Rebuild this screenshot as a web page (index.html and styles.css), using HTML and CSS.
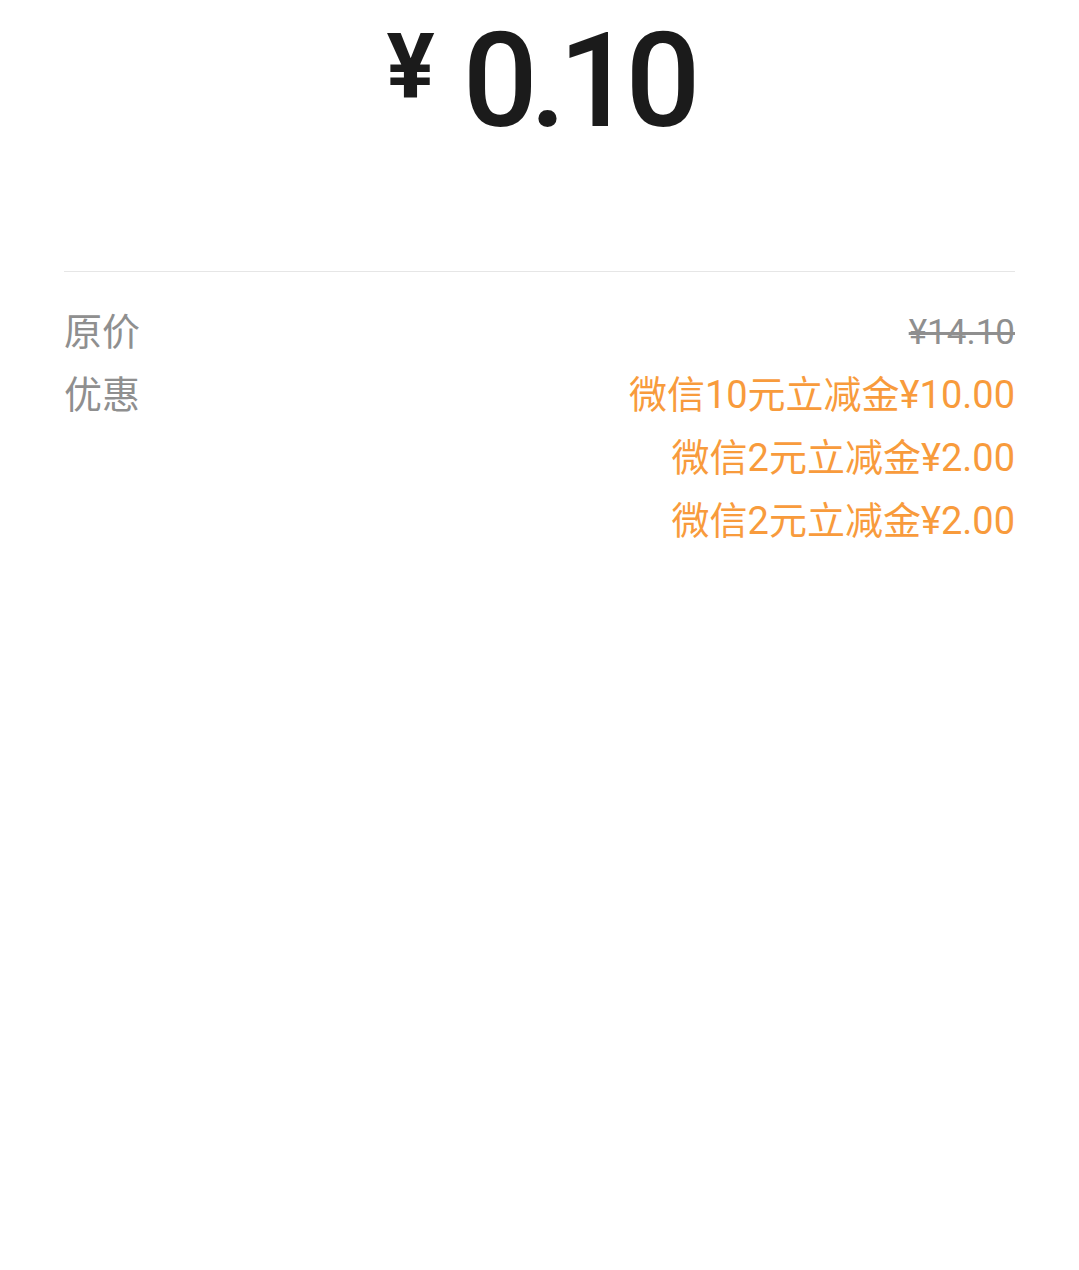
FILE: index.html
```html
<!DOCTYPE html>
<html lang="zh-CN">
<head>
    <meta charset="UTF-8">
    <meta name="viewport" content="width=device-width, initial-scale=1.0">
    <title>支付详情</title>
    <link rel="stylesheet" href="styles.css">
</head>
<body>
    <div class="page">
        <div class="amount">
            <span class="amount-currency">¥</span>
            <span class="amount-value">0.10</span>
        </div>

        <div class="divider"></div>

        <div class="details">
            <div class="detail-row">
                <div class="detail-label">原价</div>
                <div class="detail-values">
                    <div class="price-original">¥14.10</div>
                </div>
            </div>
            <div class="detail-row">
                <div class="detail-label">优惠</div>
                <div class="detail-values">
                    <div class="discount">微信10元立减金¥10.00</div>
                    <div class="discount">微信2元立减金¥2.00</div>
                    <div class="discount">微信2元立减金¥2.00</div>
                </div>
            </div>
        </div>
    </div>
</body>
</html>
```

FILE: styles.css
```css
body {
    margin: 0;
    background: #ffffff;
    font-family: Roboto, 'Noto Sans CJK SC', sans-serif;
    color: #1b1b1b;
}

.page {
    padding: 0 64px;
}

.amount {
    display: flex;
    justify-content: center;
    align-items: flex-start;
    gap: 28px;
    height: 271px;
    padding-top: 15px;
    box-sizing: border-box;
}

.amount-currency {
    font-size: 90px;
    font-weight: 700;
    line-height: 1;
    margin-top: 8px;
}

.amount-value {
    font-size: 132px;
    font-weight: 500;
    line-height: 1;
    letter-spacing: -8px;
}

.divider {
    height: 1px;
    background: #e6e6e6;
}

.details {
    padding-top: 29px;
}

.detail-row {
    display: flex;
    justify-content: space-between;
    align-items: flex-start;
}

.detail-label,
.detail-values div {
    font-size: 38px;
    line-height: 63px;
}

.detail-label {
    color: #8f8f8f;
}

.detail-values {
    text-align: right;
}

.detail-values .price-original {
    color: #8f8f8f;
    font-size: 35px;
    text-decoration: line-through;
}

.discount {
    color: #f89b3c;
}
```
